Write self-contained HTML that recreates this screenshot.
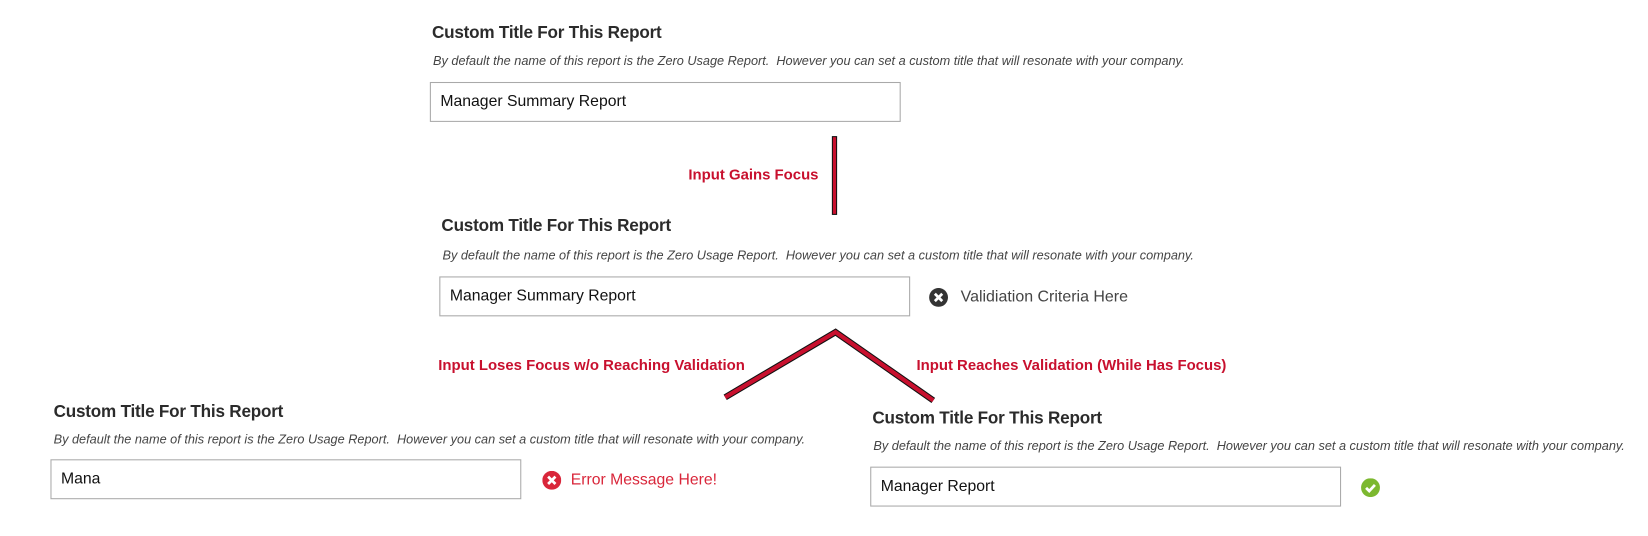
<!DOCTYPE html>
<html><head><meta charset="utf-8"><style>
body{margin:0;width:1648px;height:536px;background:#fff;position:relative;overflow:hidden;font-family:"Liberation Sans",sans-serif}
#w{position:absolute;left:0;top:0;width:1568px;height:510px;transform:scale(1.051);transform-origin:0 0}
.b{position:absolute}
.t{position:absolute;font-size:16.3px;font-weight:bold;color:#2b2b2b;white-space:nowrap;letter-spacing:-0.2px}
.d{position:absolute;font-size:12.1px;font-style:italic;color:#444;white-space:nowrap}
.i{position:absolute;width:446px;height:36px;border:1px solid #a9a9a9;box-sizing:content-box;font-size:15px;color:#111;line-height:36px;text-indent:9px}
.l{position:absolute;font-family:"Liberation Sans Narrow","Liberation Sans",sans-serif;font-weight:bold;color:#c8102e;font-size:14.2px;white-space:nowrap}
.m{position:absolute;font-size:15px;white-space:nowrap}
</style></head><body><div id="w">
<div class="t" style="left:411px;top:22px">Custom Title For This Report</div>
<div class="d" style="left:412px;top:51px">By default the name of this report is the Zero Usage Report.&nbsp; However you can set a custom title that will resonate with your company.</div>
<div class="i" style="left:409px;top:78px">Manager Summary Report</div>

<div class="t" style="left:420px;top:206px">Custom Title For This Report</div>
<div class="d" style="left:421px;top:236px">By default the name of this report is the Zero Usage Report.&nbsp; However you can set a custom title that will resonate with your company.</div>
<div class="i" style="left:418px;top:263px">Manager Summary Report</div>
<svg class="b" style="left:884px;top:274px" width="18" height="18"><circle cx="9" cy="9" r="9" fill="#333"/><path d="M5.5 5.5L12.5 12.5M12.5 5.5L5.5 12.5" stroke="#fff" stroke-width="2.6"/></svg>
<div class="m" style="left:914px;top:274px;color:#444;font-size:15.2px">Validiation Criteria Here</div>

<div class="t" style="left:51px;top:383px">Custom Title For This Report</div>
<div class="d" style="left:51px;top:411px">By default the name of this report is the Zero Usage Report.&nbsp; However you can set a custom title that will resonate with your company.</div>
<div class="i" style="left:48px;top:437px">Mana</div>
<svg class="b" style="left:516px;top:448px" width="18" height="18"><circle cx="9" cy="9" r="9" fill="#d9263a"/><path d="M5.5 5.5L12.5 12.5M12.5 5.5L5.5 12.5" stroke="#fff" stroke-width="2.6"/></svg>
<div class="m" style="left:543px;top:448px;color:#d9263a">Error Message Here!</div>

<div class="t" style="left:830px;top:389px">Custom Title For This Report</div>
<div class="d" style="left:831px;top:417px">By default the name of this report is the Zero Usage Report.&nbsp; However you can set a custom title that will resonate with your company.</div>
<div class="i" style="left:828px;top:444px">Manager Report</div>
<svg class="b" style="left:1295px;top:455px" width="18" height="18"><circle cx="9" cy="9" r="9" fill="#7cb82f"/><path d="M4.8 9.2L7.8 12.2L13.2 6.4" stroke="#fff" stroke-width="2.6" fill="none"/></svg>

<svg class="b" style="left:0;top:0" width="1568" height="510">
<rect x="792" y="130" width="4" height="74" fill="#c8102e" stroke="#111" stroke-width="1"/>
<path d="M690 378L795 316L888 381" fill="none" stroke="#111" stroke-width="6"/>
<path d="M690 378L795 316L888 381" fill="none" stroke="#c8102e" stroke-width="4"/>
</svg>
<div class="l" style="left:655px;top:159px">Input Gains Focus</div>
<div class="l" style="left:417px;top:340px">Input Loses Focus w/o Reaching Validation</div>
<div class="l" style="left:872px;top:340px">Input Reaches Validation (While Has Focus)</div>
</div></body></html>
